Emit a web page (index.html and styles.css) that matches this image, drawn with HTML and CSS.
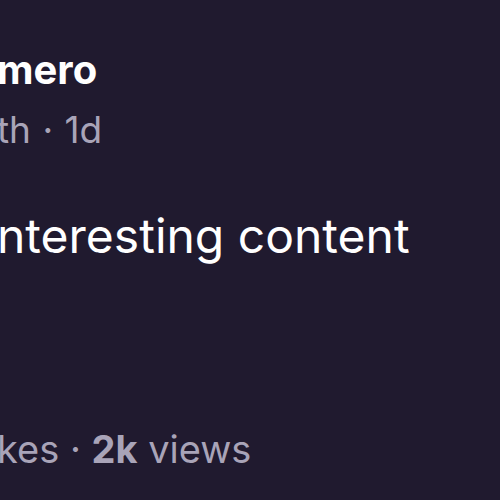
FILE: index.html
```html
<!DOCTYPE html>
<html>
<head>
<meta charset="utf-8">
<link rel="stylesheet" href="styles.css">
</head>
<body>
<div class="post">
  <div class="head">
    <div class="name">mero</div>
    <div class="meta">th · 1d</div>
  </div>
  <div class="content">nteresting content</div>
  <div class="stats">kes · <b>2k</b> views</div>
</div>
</body>
</html>
```
FILE: styles.css
```css
html, body {
  margin: 0;
  padding: 0;
  background: #201a2f;
  width: 500px;
  height: 500px;
  overflow: hidden;
}
.post {
  font-family: Inter, "Noto Sans", sans-serif;
  display: flex;
  flex-direction: column;
  padding-top: 48px;
  color: #ffffff;
  white-space: nowrap;
}
.head {
  display: flex;
  flex-direction: column;
}
.name {
  font-size: 40px;
  font-weight: 700;
  line-height: 44px;
  margin-left: -3px;
}
.meta {
  font-size: 37px;
  line-height: 44px;
  margin-top: 16px;
  color: #a9a4b8;
  margin-left: -3px;
  word-spacing: 1px;
}
.content {
  font-size: 48px;
  line-height: 56px;
  margin-top: 56px;
  margin-left: -3px;
}
.stats {
  font-size: 38px;
  line-height: 44px;
  margin-top: 163px;
  color: #a9a4b8;
  margin-left: -3px;
}
.stats b {
  font-weight: 700;
}
```
